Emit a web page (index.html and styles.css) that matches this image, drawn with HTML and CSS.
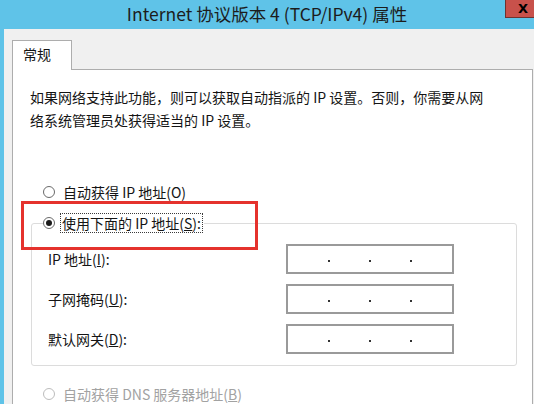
FILE: index.html
```html
<!DOCTYPE html>
<html lang="zh-CN">
<head>
<meta charset="utf-8">
<title>Internet 协议版本 4 (TCP/IPv4) 属性</title>
<link rel="stylesheet" href="styles.css">
</head>
<body>
<div class="window">
  <div class="titlebar">
    <span class="title">Internet 协议版本 4 (TCP/IPv4) 属性</span>
    <span class="close">X</span>
  </div>
  <div class="client">
    <div class="tabs"><div class="tab">常规</div></div>
    <div class="panel">
      <p class="intro">如果网络支持此功能，则可以获取自动指派的 IP 设置。否则，你需要从网<br>络系统管理员处获得适当的 IP 设置。</p>
      <div class="radio-row first">
        <span class="radio"></span>
        <span>自动获得 IP 地址(O)</span>
      </div>
      <fieldset class="group">
        <legend class="radio-row">
          <span class="radio checked"></span>
          <span class="focus">使用下面的 IP 地址(<u>S</u>):</span>
        </legend>
        <div class="fields">
          <label>IP 地址(<u>I</u>):</label>
          <div class="ip"><i></i><i></i><i></i></div>
          <label>子网掩码(<u>U</u>):</label>
          <div class="ip"><i></i><i></i><i></i></div>
          <label>默认网关(<u>D</u>):</label>
          <div class="ip"><i></i><i></i><i></i></div>
        </div>
      </fieldset>
      <div class="radio-row disabled">
        <span class="radio"></span>
        <span>自动获得 DNS 服务器地址(<u>B</u>)</span>
      </div>
    </div>
  </div>
  <div class="highlight"></div>
</div>
</body>
</html>
```
FILE: styles.css
```css
html, body {
  margin: 0;
  padding: 0;
  background: #ffffff;
}
body {
  font-family: "Noto Sans CJK SC", "Noto Sans", sans-serif;
  color: #141414;
}
.window {
  position: relative;
  width: 534px;
  height: 404px;
  overflow: hidden;
  background: #5fc3e8;
  display: flex;
  flex-direction: column;
}
.titlebar {
  position: relative;
  height: 29px;
  flex: none;
  display: flex;
  justify-content: center;
}
.title {
  font-size: 17.5px;
  line-height: 27px;
  color: #1c1c1c;
  white-space: nowrap;
}
.close {
  position: absolute;
  top: 0;
  right: 0;
  width: 22px;
  height: 17px;
  padding-left: 6px;
  background: #c8514b;
  border-left: 1px solid #6e3330;
  border-bottom: 1px solid #6e3330;
  color: #000;
  font-family: "DejaVu Sans", sans-serif;
  font-weight: bold;
  font-size: 13px;
  line-height: 17px;
  text-align: center;
}
.client {
  flex: 1;
  margin-left: 4px;
  background: #f0f0f0;
  padding: 11px 1px 0 8px;
  display: flex;
  flex-direction: column;
}
.tabs {
  display: flex;
  position: relative;
  z-index: 1;
  margin-bottom: -1px;
}
.tab {
  width: 60px;
  height: 30px;
  border: 1px solid #adadad;
  border-bottom: none;
  background: #ffffff;
  font-size: 14px;
  line-height: 27px;
  padding-left: 10px;
  box-sizing: border-box;
}
.panel {
  flex: 1;
  background: #ffffff;
  border: 1px solid #adadad;
  border-bottom: none;
  padding: 16px 16px 0 17px;
}
.intro {
  margin: 0;
  font-size: 14px;
  line-height: 23px;
  white-space: nowrap;
}
.radio-row {
  display: flex;
  align-items: center;
  gap: 8px;
  height: 18px;
  font-size: 14px;
  line-height: 18px;
  white-space: nowrap;
}
.radio-row.first {
  margin: 51px 0 0 13px;
}
.radio {
  width: 12px;
  height: 12px;
  border: 1px solid #6a6a6a;
  border-radius: 50%;
  box-sizing: border-box;
  background: #fff;
  display: flex;
  align-items: center;
  justify-content: center;
  flex: none;
}
.radio.checked::after {
  content: "";
  width: 6px;
  height: 6px;
  border-radius: 50%;
  background: #1a1a1a;
}
.focus {
  outline: 1px dotted #3a3a3a;
  outline-offset: 0;
  margin-left: -2px;
  padding: 0 1px;
}
.group {
  margin: 13px 0 0 1px;
  width: 486px;
  box-sizing: border-box;
  border: 1px solid #dcdcdc;
  border-radius: 3px;
  padding: 12px 16px 11px 16px;
  min-inline-size: 0;
}
.group legend {
  padding: 0 2px 0 0;
  margin-left: -5px;
  background: #fff;
}
.fields {
  display: grid;
  grid-template-columns: 238px 168px;
  grid-auto-rows: 30px;
  row-gap: 10px;
  align-items: center;
  font-size: 14px;
}
.fields label {
  line-height: 18px;
}
.ip {
  height: 30px;
  box-sizing: border-box;
  border: 2px solid #9a9a9a;
  background: #fff;
  display: flex;
  justify-content: center;
  align-items: center;
  gap: 39px;
  padding-top: 4px;
}
.ip i {
  width: 2px;
  height: 2px;
  background: #333;
}
.radio-row.disabled {
  margin: 19px 0 0 13px;
  color: #a2a2a2;
}
.radio-row.disabled .radio {
  border-color: #bcbcbc;
}
.highlight {
  position: absolute;
  left: 21px;
  top: 201px;
  width: 237px;
  height: 49px;
  border: 3px solid #e5322d;
  box-sizing: border-box;
}
```
